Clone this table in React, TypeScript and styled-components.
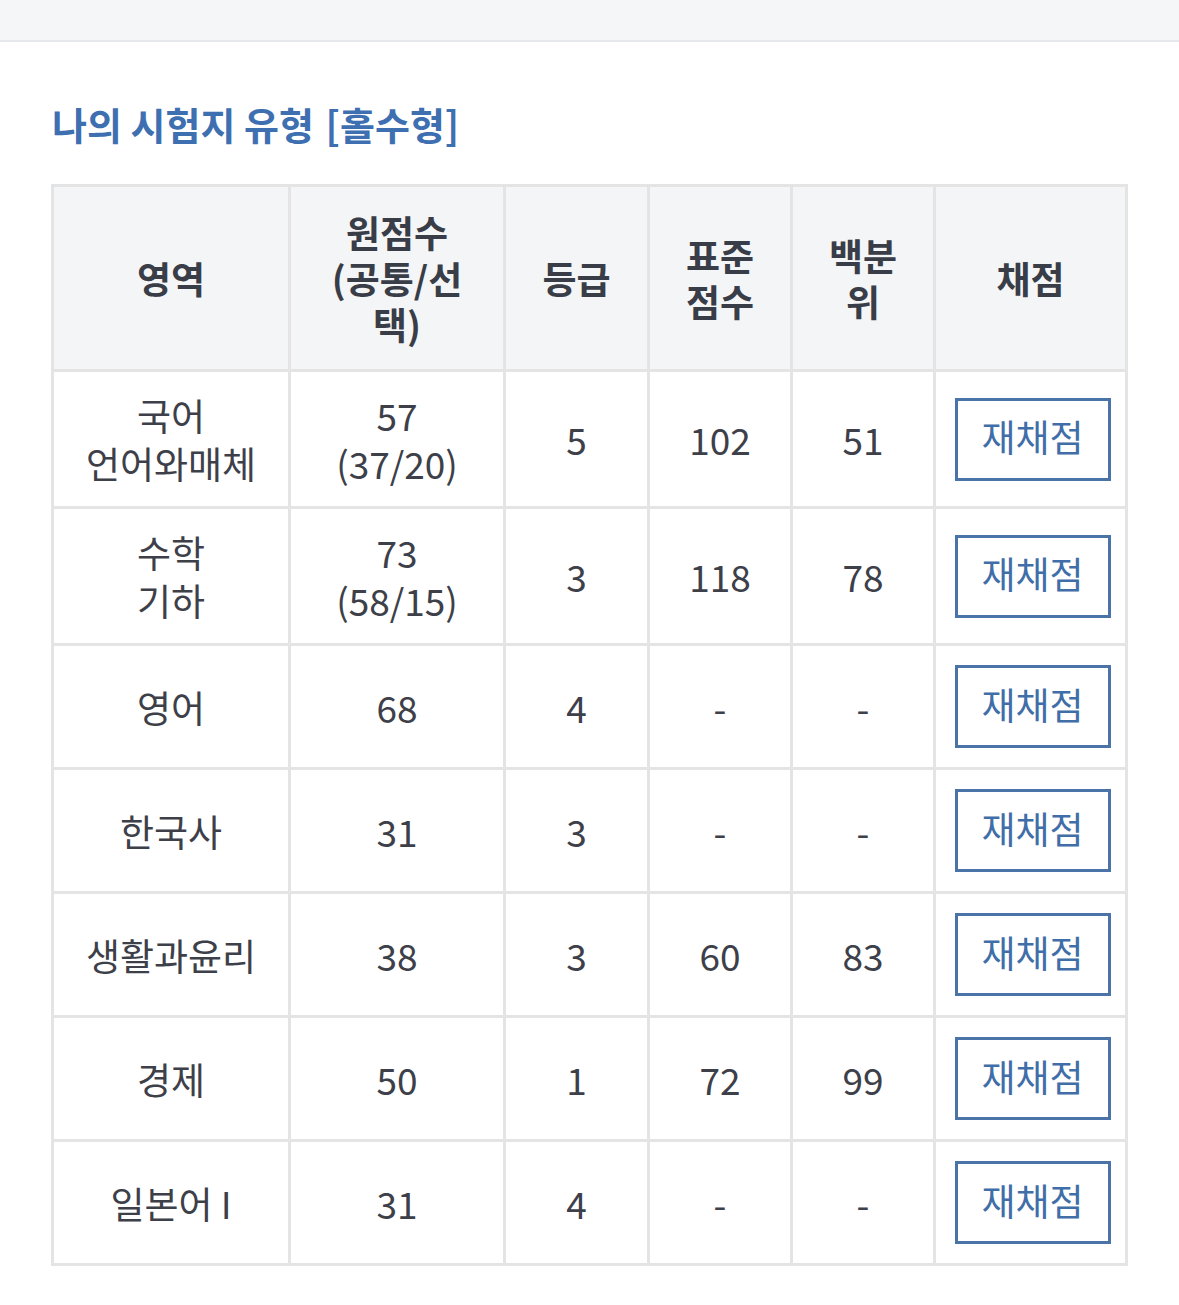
import styled, { createGlobalStyle } from "styled-components"

const GlobalStyle = createGlobalStyle`
  body {
    margin: 0;
    background: #ffffff;
    font-family: "Noto Sans CJK KR", "Noto Sans", sans-serif;
  }
`

type Row = {
  area: string[]
  raw: string[]
  grade: string
  standard: string
  percentile: string
}

const rows: Row[] = [
  { area: ["국어", "언어와매체"], raw: ["57", "(37/20)"], grade: "5", standard: "102", percentile: "51" },
  { area: ["수학", "기하"], raw: ["73", "(58/15)"], grade: "3", standard: "118", percentile: "78" },
  { area: ["영어"], raw: ["68"], grade: "4", standard: "-", percentile: "-" },
  { area: ["한국사"], raw: ["31"], grade: "3", standard: "-", percentile: "-" },
  { area: ["생활과윤리"], raw: ["38"], grade: "3", standard: "60", percentile: "83" },
  { area: ["경제"], raw: ["50"], grade: "1", standard: "72", percentile: "99" },
  { area: ["일본어 I"], raw: ["31"], grade: "4", standard: "-", percentile: "-" },
]

const Lines = ({ items }: { items: string[] }) => (
  <>
    {items.map((t, i) => (
      <Line key={i}>{t}</Line>
    ))}
  </>
)

const App = () => {
  return (
    <Page>
      <GlobalStyle />
      <TopBar />
      <Content>
        <Title>
          나의 시험지 유형 <Bracket>[홀수형]</Bracket>
        </Title>
        <ScoreTable>
          <colgroup>
            <col style={{ width: 237 }} />
            <col style={{ width: 215 }} />
            <col style={{ width: 144 }} />
            <col style={{ width: 143 }} />
            <col style={{ width: 143 }} />
            <col style={{ width: 192 }} />
          </colgroup>
          <thead>
            <tr>
              <Th>영역</Th>
              <Th>
                <Lines items={["원점수", "(공통/선", "택)"]} />
              </Th>
              <Th>등급</Th>
              <Th>
                <Lines items={["표준", "점수"]} />
              </Th>
              <Th>
                <Lines items={["백분", "위"]} />
              </Th>
              <Th>채점</Th>
            </tr>
          </thead>
          <tbody>
            {rows.map((r, i) => (
              <tr key={i}>
                <Td>
                  <Lines items={r.area} />
                </Td>
                <Td>
                  <Lines items={r.raw} />
                </Td>
                <Td>{r.grade}</Td>
                <Td>{r.standard}</Td>
                <Td>{r.percentile}</Td>
                <ButtonCell>
                  <RescoreButton>재채점</RescoreButton>
                </ButtonCell>
              </tr>
            ))}
          </tbody>
        </ScoreTable>
      </Content>
    </Page>
  )
}

const Page = styled.div`
  width: 1179px;
  min-height: 1305px;
  background: #ffffff;
`

const TopBar = styled.div`
  height: 40px;
  background: #f5f6f8;
  border-bottom: 2px solid #e6e7ea;
`

const Content = styled.div`
  padding: 0 52px 0 51px;
`

const Title = styled.h2`
  margin: 0;
  padding: 56px 0 34px 1px;
  font-size: 38px;
  line-height: 52px;
  font-weight: 700;
  color: #3e6fb1;
`

const Bracket = styled.span`
  margin-left: 3px;
`

const ScoreTable = styled.table`
  width: 1074px;
  table-layout: fixed;
  border-collapse: collapse;
  border: 3px solid #e4e4e4;
`

const Th = styled.th`
  background: #f4f5f7;
  border: 3px solid #e4e4e4;
  padding: 22px 6px;
  font-size: 37px;
  line-height: 46px;
  font-weight: 700;
  color: #393d47;
  text-align: center;
  vertical-align: middle;
`

const Td = styled.td`
  border: 3px solid #e4e4e4;
  padding: 19px 6px;
  font-size: 37px;
  line-height: 48px;
  font-weight: 400;
  color: #3d4049;
  text-align: center;
  vertical-align: middle;
`

const ButtonCell = styled(Td)`
  padding: 19px 4px 19px 8px;
`

const Line = styled.div`
  white-space: nowrap;
`

const RescoreButton = styled.button`
  display: block;
  width: 156px;
  height: 83px;
  margin: 0 auto;
  border: 3px solid #4a73a8;
  background: #ffffff;
  color: #3f6ea9;
  font-family: "Noto Sans CJK KR", "Noto Sans", sans-serif;
  font-size: 37px;
  font-weight: 400;
  padding: 0 0 6px;
  cursor: pointer;
`

export default App
